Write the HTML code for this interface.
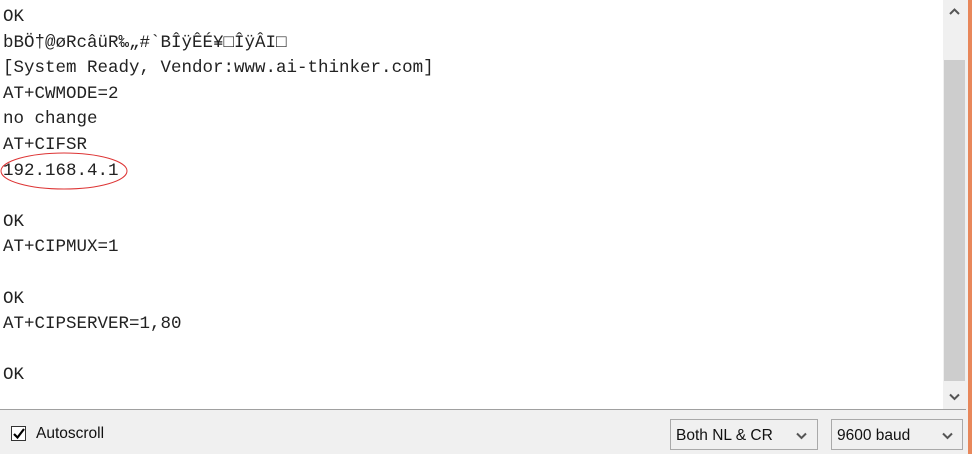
<!DOCTYPE html>
<html><head><meta charset="utf-8"><style>
body{margin:0;width:972px;height:454px;overflow:hidden;background:#f0f0f0;position:relative;font-family:"Liberation Sans",sans-serif}
#out{position:absolute;left:0;top:0;width:943px;height:409px;background:#fff;border-bottom:1px solid #a0a0a0}
#txt{position:absolute;left:3px;top:5px;font-family:"Liberation Mono",monospace;font-size:17.5px;line-height:25.6px;color:#222;white-space:pre}
#sb{position:absolute;left:943px;top:0;width:23px;height:409px;background:#f0f0f0;border-bottom:1px solid #a0a0a0}
#thumb{position:absolute;left:1px;top:60px;width:21px;height:321px;background:#cdcdcd}
#or{position:absolute;left:968px;top:0;width:4px;height:454px;background:#e8875a}
.sel{position:absolute;top:419px;height:31px;border:1px solid #a9a9a9;background:#f0f0f0;font-size:15.5px;color:#111;line-height:31px;box-sizing:border-box;padding-left:5px}
</style></head><body>
<div id="out"><div id="txt">OK
bBÖ†@øRcâüR‰„#`BÎÿÊÉ¥□ÎÿÂI□
[System Ready, Vendor:www.ai-thinker.com]
AT+CWMODE=2
no change
AT+CIFSR
192.168.4.1

OK
AT+CIPMUX=1

OK
AT+CIPSERVER=1,80

OK</div>
<svg style="position:absolute;left:0;top:151px" width="132" height="40"><ellipse cx="64" cy="20" rx="63" ry="18" fill="none" stroke="#d33" stroke-width="1"/></svg>
</div>
<div id="sb"><div id="thumb"></div>
<svg style="position:absolute;left:6px;top:8px" width="11" height="8"><path d="M1 6L5.5 1.5L10 6" fill="none" stroke="#555" stroke-width="2"/></svg>
<svg style="position:absolute;left:6px;top:393px" width="11" height="8"><path d="M1 1.5L5.5 6L10 1.5" fill="none" stroke="#555" stroke-width="2"/></svg>
</div>
<div id="or"></div>
<div style="position:absolute;left:11px;top:426px;width:15px;height:15px;border:1px solid #333;background:#fff;box-sizing:border-box"></div>
<svg style="position:absolute;left:12px;top:427px" width="14" height="13"><path d="M2 7L5.5 10.5L12 2" fill="none" stroke="#000" stroke-width="2.2"/></svg>
<div style="position:absolute;left:36px;top:425px;font-size:15.5px;color:#111">Autoscroll</div>
<div class="sel" style="left:670px;width:148px">Both NL &amp; CR
<svg style="position:absolute;left:125px;top:12px" width="11" height="8"><path d="M1 1.5L5.5 6L10 1.5" fill="none" stroke="#555" stroke-width="2"/></svg></div>
<div class="sel" style="left:831px;width:132px">9600 baud
<svg style="position:absolute;left:110px;top:12px" width="11" height="8"><path d="M1 1.5L5.5 6L10 1.5" fill="none" stroke="#555" stroke-width="2"/></svg></div>
</body></html>
